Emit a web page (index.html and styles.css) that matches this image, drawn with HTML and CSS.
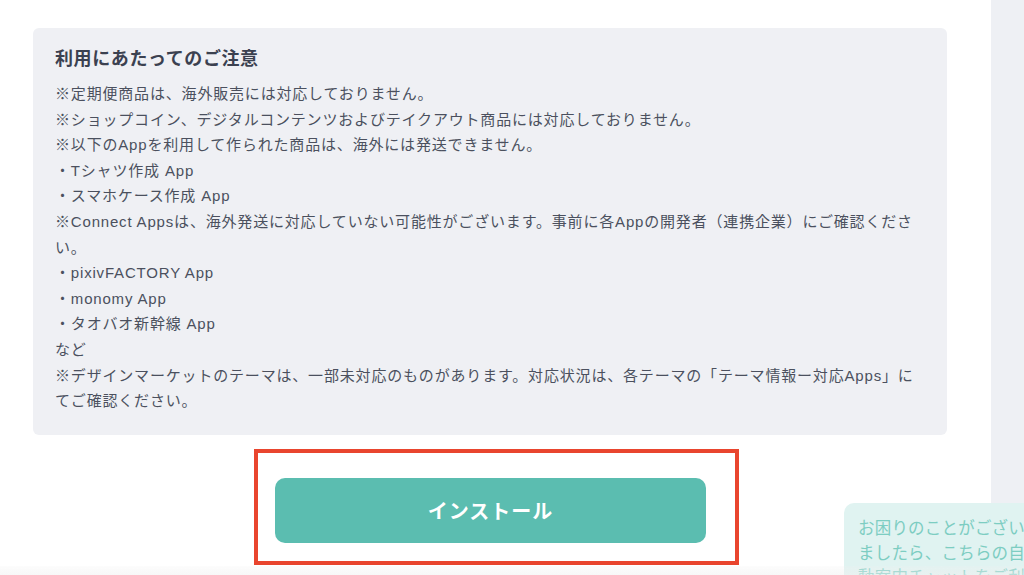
FILE: index.html
```html
<!DOCTYPE html>
<html lang="ja">
<head>
<meta charset="utf-8">
<title>インストール</title>
<link rel="stylesheet" href="styles.css">
</head>
<body>
<div class="page">
  <main class="main">
    <section class="notice">
      <h2 class="notice-title">利用にあたってのご注意</h2>
      <p class="notice-body">※定期便商品は、海外販売には対応しておりません。<br>※ショップコイン、デジタルコンテンツおよびテイクアウト商品には対応しておりません。<br>※以下のAppを利用して作られた商品は、海外には発送できません。<br>・Tシャツ作成 App<br>・スマホケース作成 App<br>※Connect Appsは、海外発送に対応していない可能性がございます。事前に各Appの開発者（連携企業）にご確認ください。<br>・pixivFACTORY App<br>・monomy App<br>・タオバオ新幹線 App<br>など<br>※デザインマーケットのテーマは、一部未対応のものがあります。対応状況は、各テーマの「テーマ情報ー対応Apps」にてご確認ください。</p>
    </section>
    <div class="action">
      <div class="highlight">
        <button class="install-btn" type="button">インストール</button>
      </div>
    </div>
  </main>
  <aside class="side"></aside>
</div>
<div class="chat-bubble">お困りのことがございましたら、こちらの自動案内チャットをご利用ください。</div>
<div class="bottom-fade"></div>
</body>
</html>
```
FILE: styles.css
```css
* { box-sizing: border-box; }
html, body { margin: 0; padding: 0; }
body {
  background: #ffffff;
  font-family: "Liberation Sans", "Noto Sans CJK JP", sans-serif;
  color: #4b505e;
  overflow: hidden;
  height: 575px;
}
.page {
  display: flex;
  height: 575px;
}
.main {
  width: 991px;
  padding-top: 28px;
}
.side {
  flex: 1;
  background: #eef0f4;
}
.notice {
  margin-left: 33px;
  width: 914px;
  background: #eff0f4;
  border-radius: 6px;
  padding: 18px 23px 21px 22px;
}
.notice-title {
  margin: 0 0 8px 0;
  font-size: 18px;
  line-height: 27px;
  font-weight: 700;
  letter-spacing: 0.6px;
  color: #3b4150;
}
.notice-body {
  margin: 0;
  font-size: 15px;
  line-height: 25.6px;
  letter-spacing: 0.82px;
  color: #4b505e;
}
.action {
  padding-top: 14px;
  padding-left: 254px;
}
.highlight {
  width: 485px;
  height: 116px;
  border: 4px solid #e9452e;
  padding: 25px 0 0 17px;
}
.install-btn {
  display: flex;
  align-items: center;
  justify-content: center;
  width: 431px;
  height: 65px;
  border: none;
  border-radius: 10px;
  background: #5bbdb0;
  color: #ffffff;
  font-family: "Noto Sans CJK JP", sans-serif;
  font-size: 20px;
  font-weight: 700;
  letter-spacing: 1px;
  padding: 0;
}
.chat-bubble {
  position: fixed;
  left: 844px;
  top: 503px;
  width: 210px;
  padding: 12px 14px;
  background: #e0f3f1;
  border-radius: 10px 0 0 0;
  color: #7dcdc2;
  font-family: "Noto Sans CJK JP", sans-serif;
  font-size: 16.5px;
  line-height: 24.5px;
  letter-spacing: 0.2px;
}
.bottom-fade {
  position: fixed;
  left: 0;
  right: 0;
  bottom: 0;
  height: 9px;
  background: linear-gradient(rgba(240,240,240,0.2), rgba(240,240,240,0.5));
}
```
